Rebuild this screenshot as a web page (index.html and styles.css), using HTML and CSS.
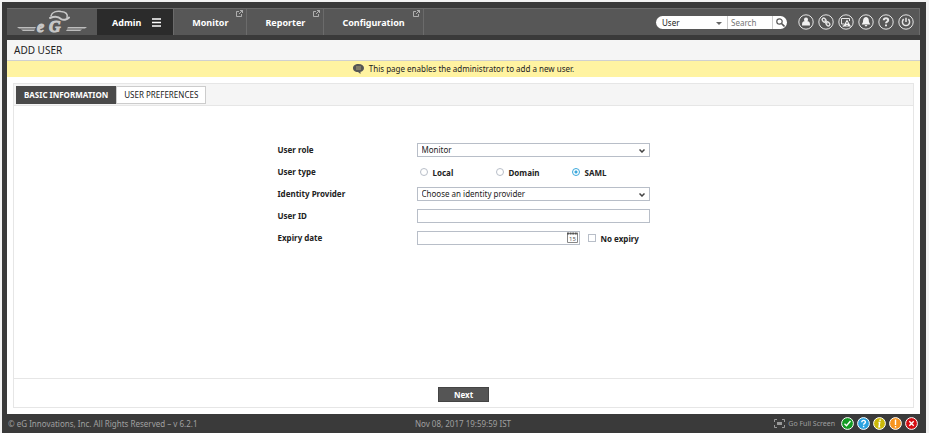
FILE: index.html
```html
<!DOCTYPE html>
<html lang="en">
<head>
    <meta charset="UTF-8">
    <meta name="viewport" content="width=device-width, initial-scale=1.0">
    <title>Add User</title>
    <link rel="stylesheet" href="styles.css">
</head>
<body>
    <div class="page">
        <header class="topbar">
            <a href="#" class="logo" aria-label="eG home">
                <svg width="70" height="24" viewBox="0 0 70 24">
                    <path d="M0 17h19l-1 1.500H2zM4 19.500h14l-1 1.500H6zM51 17h19l-2 1.500H50zM50 19.500h15l-2 1.500H49z" fill="#bdbdbd"/>
                    <g fill="none" stroke="#c8c8c8" stroke-linecap="round">
                        <path d="M34 6C35 2 40 1 44 1.500c5 .5 7 2.500 6 6" stroke-width="1.500"/>
                        <path d="M33 8c5-2 9-1 11 1 2 1.500 6 .8 8-1.500" stroke-width="2"/>
                    </g>
                    <text x="20 32" y="22" class="logo-text">eG</text>
                </svg>
            </a>
            <nav class="menu">
                <a href="#" class="menu-item active">Admin
                    <svg width="9" height="9" viewBox="0 0 9 9"><path d="M0 1h9M0 4.500h9M0 8h9" stroke="#fff" stroke-width="1.500"/></svg>
                </a>
                <a href="#" class="menu-item">Monitor
                    <svg class="popout" width="7" height="7" viewBox="0 0 7 7"><path d="M3 1.500H.5v5h5V4M3 4l3.500-3.500M4 .5h2.500V3" fill="none" stroke="#c4c4c4" stroke-width=".8"/></svg>
                </a>
                <a href="#" class="menu-item">Reporter
                    <svg class="popout" width="7" height="7" viewBox="0 0 7 7"><path d="M3 1.500H.5v5h5V4M3 4l3.500-3.500M4 .5h2.500V3" fill="none" stroke="#c4c4c4" stroke-width=".8"/></svg>
                </a>
                <a href="#" class="menu-item">Configuration
                    <svg class="popout" width="7" height="7" viewBox="0 0 7 7"><path d="M3 1.500H.5v5h5V4M3 4l3.500-3.500M4 .5h2.500V3" fill="none" stroke="#c4c4c4" stroke-width=".8"/></svg>
                </a>
            </nav>
            <form class="search" action="#">
                <span class="search-type">
                    <select aria-label="Search in"><option>User</option></select>
                    <svg class="arrow" width="6" height="3" viewBox="0 0 6 3"><path d="M0 0h6L3 3z" fill="#666"/></svg>
                </span>
                <input type="text" class="search-text" placeholder="Search" aria-label="Search">
                <button type="submit" class="search-button" aria-label="Go">
                    <svg width="9" height="9" viewBox="0 0 9 9"><circle cx="3.500" cy="3.500" r="2.700" fill="none" stroke="#555" stroke-width="1.200"/><path d="M5.500 5.500l3 3" stroke="#555" stroke-width="1.600"/></svg>
                </button>
            </form>
            <div class="tools">
                <button type="button" aria-label="Profile"><svg width="16" height="16" viewBox="0 0 16 16"><circle cx="8" cy="8" r="7.200"/><path class="fill" d="M8 3.500c2 0 2.500 2 1.500 3.800 2 .3 2.500 1.200 2.500 4.200H4c0-3 .5-3.900 2.500-4.200C5.500 5.500 6 3.500 8 3.500z"/></svg></button>
                <button type="button" aria-label="Links"><svg width="16" height="16" viewBox="0 0 16 16"><circle cx="8" cy="8" r="7.200"/><g transform="rotate(45 8 8)" stroke-width="1.400"><rect x="3.200" y="6.500" width="4.300" height="3" rx="1.500"/><rect x="8.500" y="6.500" width="4.300" height="3" rx="1.500"/><path d="M6 8h4"/></g></svg></button>
                <button type="button" aria-label="Alarms"><svg width="16" height="16" viewBox="0 0 16 16"><circle cx="8" cy="8" r="7.200"/><path d="M6 10H3.500V4.500h8V7M4.500 12H6"/><path class="fill" d="M9 5.500l4 7H5z"/><path d="M9 8v2M9 11v1" stroke="#555"/></svg></button>
                <button type="button" aria-label="Notifications"><svg width="16" height="16" viewBox="0 0 16 16"><circle cx="8" cy="8" r="7.200"/><path class="fill" d="M8 3c3 .5 2.800 3 3 5l1.300 2.500H3.700L5 8c.2-2 0-4.500 3-5zM6.500 11h3L8 12.700z"/></svg></button>
                <button type="button" aria-label="Help"><svg width="16" height="16" viewBox="0 0 16 16"><circle cx="8" cy="8" r="7.200"/><path d="M5.800 6.200c0-2.700 4.400-2.700 4.400 0C10.200 7.800 8 7.500 8 9.300M8 10.500v1.800" stroke-width="2"/></svg></button>
                <button type="button" aria-label="Log out"><svg width="16" height="16" viewBox="0 0 16 16"><circle cx="8" cy="8" r="7.200"/><path d="M5.700 5.200a3.600 3.600 0 1 0 4.600 0M8 3.800V8" stroke-width="1.500"/></svg></button>
            </div>
        </header>

        <main class="content">
            <h1 class="title">ADD USER</h1>
            <p class="notice">
                <svg width="11" height="10" viewBox="0 0 11 10"><path d="M5.500 0C9 0 11 1.800 11 4S9.500 7.500 7.500 7.800V10L5 8C1.500 8 0 6 0 4s2-4 5.500-4z" fill="#555"/><path d="M3 3h5M3 5h5" stroke="#aaa07a"/></svg>
                This page enables the administrator to add a new user.
            </p>
            <section class="panel">
                <div class="tabs">
                    <button type="button" class="tab active">BASIC INFORMATION</button>
                    <button type="button" class="tab">USER PREFERENCES</button>
                </div>
                <form id="user-form" class="user-form" action="#">
                    <label for="role">User role</label>
                    <div class="select-box">
                        <select id="role"><option>Monitor</option></select>
                        <svg class="arrow" width="6" height="4" viewBox="0 0 6 4"><path d="M.5.5L3 3 5.500.5" fill="none" stroke="#444" stroke-width="1.500"/></svg>
                    </div>

                    <span id="type-label">User type</span>
                    <div class="choices" role="radiogroup" aria-labelledby="type-label">
                        <label><input type="radio" name="type"> Local</label>
                        <label><input type="radio" name="type"> Domain</label>
                        <label><input type="radio" name="type" checked> SAML</label>
                    </div>

                    <label for="provider">Identity Provider</label>
                    <div class="select-box">
                        <select id="provider"><option>Choose an identity provider</option></select>
                        <svg class="arrow" width="6" height="4" viewBox="0 0 6 4"><path d="M.5.5L3 3 5.500.5" fill="none" stroke="#444" stroke-width="1.500"/></svg>
                    </div>

                    <label for="user-id">User ID</label>
                    <input type="text" id="user-id" class="text-box">

                    <label for="expiry">Expiry date</label>
                    <div class="expiry">
                        <div class="date-box">
                            <input type="text" id="expiry" class="text-box">
                            <button type="button" class="calendar" aria-label="Pick a date">
                                <svg width="11" height="11" viewBox="0 0 11 11"><path d="M.5 1.500h10v9H.5z" fill="#fff" stroke="#888"/><path d="M0 1.500h11" stroke="#555" stroke-width="2" stroke-dasharray="2 .6"/><text x="2" y="9" class="calendar-day">15</text></svg>
                            </button>
                        </div>
                        <label><input type="checkbox"> No expiry</label>
                    </div>
                </form>
                <div class="actions">
                    <button type="submit" form="user-form" class="next">Next</button>
                </div>
            </section>
        </main>

        <footer class="footer">
            <span>© eG Innovations, Inc. All Rights Reserved – v 6.2.1</span>
            <span class="clock">Nov 08, 2017 19:59:59 IST</span>
            <div class="footer-right">
                <a href="#" class="fullscreen">
                    <svg width="11" height="9" viewBox="0 0 11 9"><path d="M3 .5H.5V3M8 .5h2.500V3M3 8.500H.5V6M8 8.500h2.500V6" fill="none" stroke="#999"/><path d="M3 3h5v3H3z" fill="#999"/></svg>
                    Go Full Screen
                </a>
                <div class="states">
                    <svg width="13" height="13" viewBox="0 0 13 13"><circle cx="6.500" cy="6.500" r="5.900" fill="#119b22"/><path d="M3.500 6.800l2 2L9.500 4"/></svg>
                    <svg width="13" height="13" viewBox="0 0 13 13"><circle cx="6.500" cy="6.500" r="5.900" fill="#2ba3e0"/><path d="M4.800 5.200c0-2.400 3.600-2.400 3.600 0 0 1.200-1.800 1.200-1.800 2.500M6.600 8.800v1.500"/></svg>
                    <svg width="13" height="13" viewBox="0 0 13 13"><circle cx="6.500" cy="6.500" r="5.900" fill="#cbb80a"/><path d="M7.200 2.500L7 4M5.500 5.500h1.200L6 9.800h1.200"/></svg>
                    <svg width="13" height="13" viewBox="0 0 13 13"><circle cx="6.500" cy="6.500" r="5.900" fill="#f7941e"/><path d="M6.500 2.500V8M6.500 9v1.500"/></svg>
                    <svg width="13" height="13" viewBox="0 0 13 13"><circle cx="6.500" cy="6.500" r="5.900" fill="#d40d12"/><path d="M4.300 4.300l4.400 4.400M8.700 4.300L4.300 8.700"/></svg>
                </div>
            </div>
        </footer>
    </div>
</body>
</html>
```
FILE: styles.css
```css
* {
    box-sizing: border-box;
}
body {
    margin: 0;
    padding: 2px 3px 0 2px;
    background-color: #f3f3f3;
    font-family: "Noto Sans", "Open Sans", sans-serif;
    font-size: 8px;
    color: #222;
}
button, input, select {
    font-family: inherit;
    font-size: inherit;
    color: inherit;
    margin: 0;
    padding: 0;
}
a {
    color: inherit;
    text-decoration: none;
}
svg {
    flex: none;
}
.page {
    display: flex;
    flex-direction: column;
    min-height: calc(100vh - 2px);
    padding: 6px 6px 0 5px;
    background-color: #3a3a3a;
}
.topbar {
    display: flex;
    align-items: center;
    height: 27px;
    margin-bottom: 5px;
    background-color: #575757;
    border-top: 1px solid #6b6b6b;
    border-right: 1px solid #6b6b6b;
}
.logo {
    display: flex;
    padding: 0 10px;
}
.logo-text {
    font: italic bold 16px "Liberation Serif", serif;
    fill: #c8c8c8;
    stroke: #c8c8c8;
    stroke-width: 1px;
}
.menu {
    display: flex;
    align-self: stretch;
    font-size: 9px;
    font-weight: bold;
    color: #fff;
}
.menu-item {
    position: relative;
    display: flex;
    align-items: center;
    gap: 11px;
    padding: 0 18px;
    border-right: 1px solid #6b6b6b;
}
.menu-item.active {
    padding: 0 12px 0 15px;
    background-color: #2b2b2b;
}
.popout {
    position: absolute;
    top: 1px;
    right: 3px;
}
.search {
    display: flex;
    height: 13px;
    margin-left: auto;
    overflow: hidden;
    background-color: #fff;
    border-radius: 7px;
}
.search-type {
    position: relative;
    display: flex;
    width: 71px;
}
.search select {
    width: 100%;
    padding-left: 6px;
    border: none;
    background: none;
    appearance: none;
}
.arrow {
    position: absolute;
    top: 6px;
    right: 5px;
    pointer-events: none;
}
.search-text {
    width: 46px;
    padding-left: 3px;
    border: 1px solid #ccc;
    border-width: 0 1px;
}
.search-button {
    display: flex;
    align-items: center;
    justify-content: center;
    width: 14px;
    border: none;
    background: none;
}
.tools {
    display: flex;
    gap: 4px;
    padding: 0 5px 0 11px;
}
.tools button {
    display: flex;
    border: none;
    background: none;
}
.tools svg {
    fill: none;
    stroke: #e6e6e6;
}
.tools .fill {
    fill: #f2f2f2;
    stroke: none;
}
.content {
    display: flex;
    flex: 1;
    flex-direction: column;
    background-color: #fff;
}
.title {
    margin: 0;
    padding-left: 7px;
    font-size: 10px;
    font-weight: normal;
    line-height: 20px;
    background-color: #f5f5f5;
    border-bottom: 1px solid #d0d0d0;
}
.notice {
    display: flex;
    align-items: center;
    justify-content: center;
    gap: 5px;
    height: 16px;
    margin: 0;
    padding-bottom: 1px;
    background-color: #fff3a1;
}
.panel {
    display: flex;
    flex: 1;
    flex-direction: column;
    margin: 6px;
    border: 1px solid #e6e6e6;
}
.tabs {
    display: flex;
    padding: 2px 2px 1px;
    background-color: #f5f5f5;
    border-bottom: 1px solid #e6e6e6;
}
.tab {
    height: 18px;
    padding: 0 7px 1px;
    background-color: #fff;
    border: 1px solid #ccc;
}
.tab.active {
    background-color: #4a4a4a;
    border-color: #4a4a4a;
    font-weight: bold;
    color: #fff;
}
.user-form {
    display: grid;
    flex: 1;
    grid-template-columns: 139px 233px;
    grid-auto-rows: 22px;
    align-items: center;
    justify-content: center;
    align-content: start;
    padding-top: 33px;
    font-weight: bold;
    border-bottom: 1px solid #e6e6e6;
}
.user-form > label, .user-form > span {
    padding-bottom: 2px;
}
.select-box, .date-box {
    position: relative;
    display: flex;
}
.select-box select, .text-box {
    width: 100%;
    height: 14px;
    padding: 0 4px 1px;
    font-weight: normal;
    background-color: #fff;
    border: 1px solid #b8bec8;
    border-radius: 0;
    appearance: none;
}
.choices {
    display: grid;
    grid-template-columns: 76px 76px 1fr;
    padding-left: 3px;
}
.choices label, .expiry label {
    display: flex;
    align-items: center;
    gap: 5px;
}
.choices input, .expiry [type="checkbox"] {
    width: 8px;
    height: 8px;
    background-color: #fff;
    border: 1px solid #b8bec8;
    appearance: none;
}
.choices input {
    border-radius: 50%;
}
.choices input:checked {
    border-color: #3aa8dc;
    background-image: radial-gradient(circle, #3aa8dc 1px, #fff 2px);
}
.expiry {
    display: flex;
    align-items: center;
    gap: 8px;
}
.date-box {
    width: 163px;
}
.calendar {
    position: absolute;
    top: 1px;
    right: 2px;
    display: flex;
    border: none;
    background: none;
}
.calendar-day {
    font-size: 6px;
    fill: #555;
}
.actions {
    display: flex;
    align-items: center;
    justify-content: center;
    height: 28px;
    padding-top: 2px;
}
.next {
    width: 51px;
    height: 15px;
    background-color: #555;
    border: 1px solid #444;
    font-weight: bold;
    color: #fff;
}
.footer {
    display: grid;
    grid-template-columns: 1fr auto 1fr;
    align-items: center;
    height: 19px;
    padding: 0 2px 0 1px;
    color: #a0a0a0;
}
.footer-right {
    display: flex;
    align-items: center;
    justify-content: flex-end;
    gap: 6px;
}
.fullscreen {
    display: flex;
    align-items: center;
    gap: 3px;
    font-size: 7px;
}
.states {
    display: flex;
    gap: 3px;
}
.states svg {
    fill: none;
    stroke: #fff;
    stroke-width: 1.4;
}
.states circle {
    stroke-width: 1;
}
```
